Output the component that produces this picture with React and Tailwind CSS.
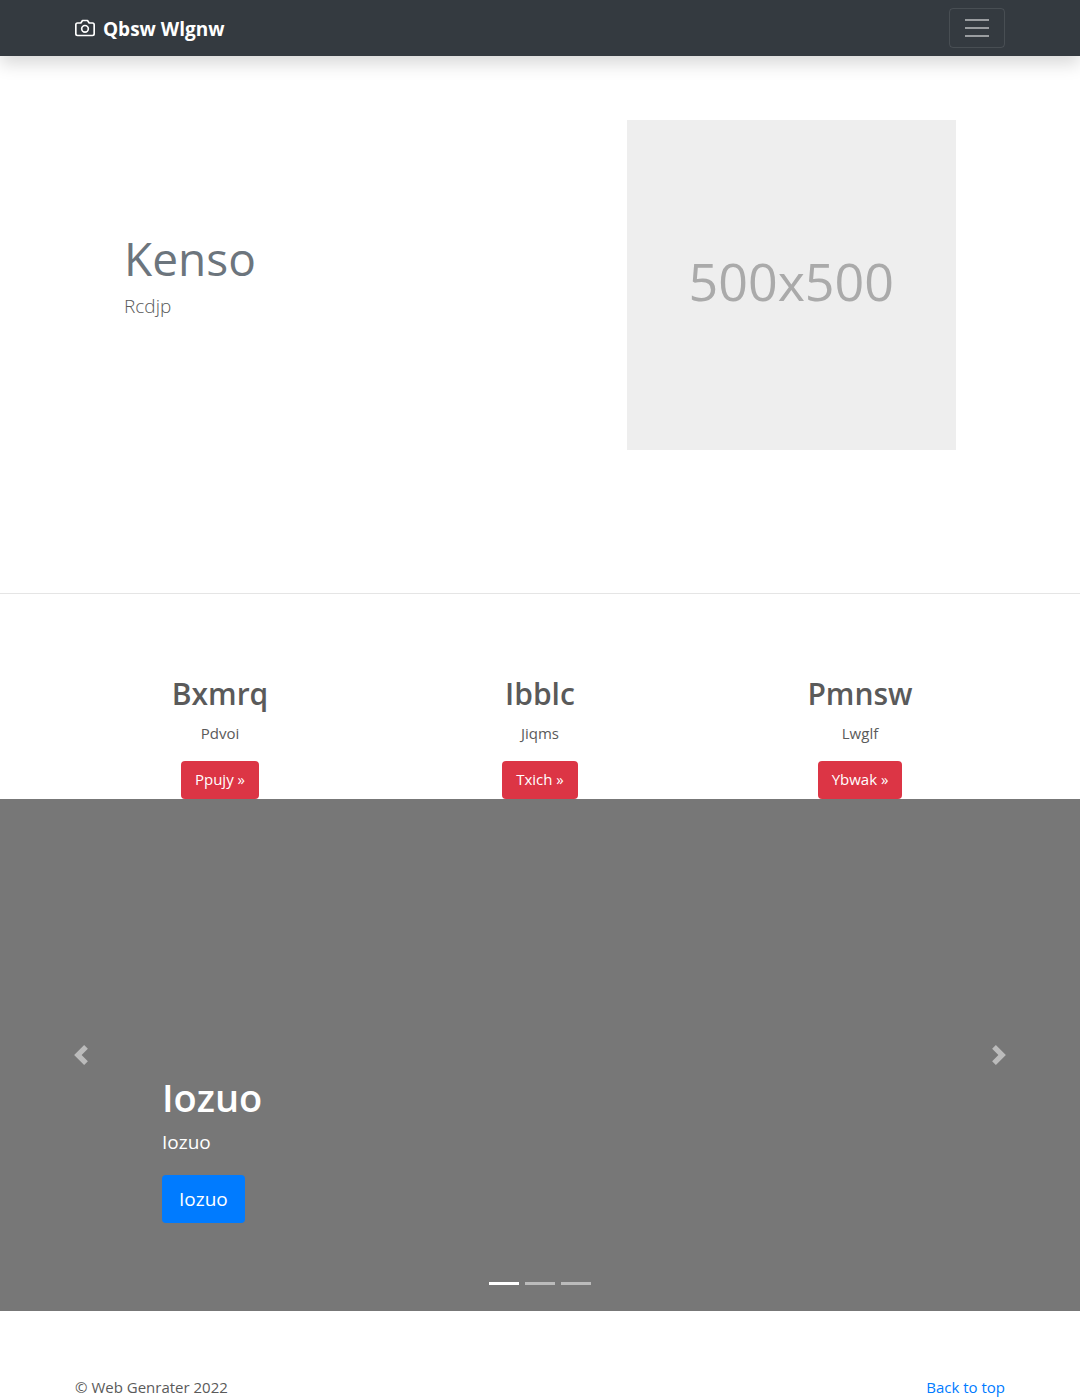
const features = [
  { title: 'Bxmrq', text: 'Pdvoi', action: 'Ppujy »' },
  { title: 'Ibblc', text: 'Jiqms', action: 'Txich »' },
  { title: 'Pmnsw', text: 'Lwglf', action: 'Ybwak »' },
];

function CameraIcon() {
  return (
    <svg className="mr-2 size-5" viewBox="0 0 24 24" fill="none" stroke="currentColor" strokeWidth="2" strokeLinecap="round" strokeLinejoin="round" aria-hidden="true">
      <path d="M23 19a2 2 0 0 1-2 2H3a2 2 0 0 1-2-2V8a2 2 0 0 1 2-2h4l2-3h6l2 3h4a2 2 0 0 1 2 2z" />
      <circle cx="12" cy="13" r="4" />
    </svg>
  );
}

function Header() {
  return (
    <header className="bg-[#343a40] shadow-[0_8px_16px_rgba(0,0,0,0.15)]">
      <div className="mx-auto flex h-14 max-w-[960px] items-center justify-between px-[15px] text-white">
        <a href="#top" className="flex items-center text-[19px] leading-[30px] font-bold">
          <CameraIcon />
          <span className="pt-0.5">Qbsw Wlgnw</span>
        </a>
        <button type="button" aria-label="Toggle navigation" className="flex h-10 w-14 items-center justify-center rounded border border-white/10 text-white/50">
          <svg className="size-[30px]" viewBox="0 0 30 30" stroke="currentColor" strokeWidth="2" strokeMiterlimit="10" aria-hidden="true">
            <path d="M3 7h24M3 15h24M3 23h24" />
          </svg>
        </button>
      </div>
    </header>
  );
}

function Hero() {
  return (
    <section className="mx-auto grid max-w-[960px] grid-cols-12 px-[15px] pt-16 pb-[143px]">
      <div className="col-span-7 self-center pb-5 pl-[49px]">
        <h1 className="mb-[3px] text-[46px] leading-[60px] text-[#6c757d]">Kenso</h1>
        <p className="text-[19px] leading-[30px] font-light">Rcdjp</p>
      </div>
      <div className="col-span-5 mr-[49px] ml-[9px] flex aspect-square items-center justify-center bg-[#eee] pb-2 text-[52px] text-[#aaa]">
        500x500
      </div>
    </section>
  );
}

function Features() {
  return (
    <section className="mx-auto grid max-w-[960px] grid-cols-3 pt-20 text-center">
      {features.map((item) => (
        <div key={item.title} className="flex flex-col items-center">
          <h2 className="mb-[7px] text-[30px] leading-[40px] font-semibold">{item.title}</h2>
          <p className="mb-4 text-[15px] leading-6">{item.text}</p>
          <button type="button" className="h-[38px] rounded bg-[#dc3545] px-[14px] text-[15px] text-white">{item.action}</button>
        </div>
      ))}
    </section>
  );
}

function Carousel() {
  return (
    <section className="relative h-[512px] bg-[#777] text-white">
      <div className="absolute inset-x-[15%] bottom-[88px]">
        <h2 className="mb-[6px] text-[38px] leading-[48px] font-semibold">Iozuo</h2>
        <p className="mb-[18px] text-[19px] leading-[30px]">Iozuo</p>
        <button type="button" className="h-12 rounded bg-[#007bff] px-[17px] pt-0.5 text-[19px]">Iozuo</button>
      </div>
      <button type="button" aria-label="Previous" className="absolute inset-y-0 left-0 flex w-[15%] items-center justify-center opacity-50">
        <svg className="size-5" viewBox="0 0 8 8" fill="#fff" aria-hidden="true"><path d="M5.25 0l-4 4 4 4 1.5-1.5L4.25 4l2.5-2.5L5.25 0z" /></svg>
      </button>
      <button type="button" aria-label="Next" className="absolute inset-y-0 right-0 flex w-[15%] items-center justify-center opacity-50">
        <svg className="size-5" viewBox="0 0 8 8" fill="#fff" aria-hidden="true"><path d="M2.75 0l-1.5 1.5L3.75 4l-2.5 2.5L2.75 8l4-4-4-4z" /></svg>
      </button>
      <div className="absolute inset-x-0 bottom-[26px] flex justify-center gap-[6px]">
        <button type="button" aria-label="Slide 1" className="h-[3px] w-[30px] bg-white" />
        <button type="button" aria-label="Slide 2" className="h-[3px] w-[30px] bg-white/50" />
        <button type="button" aria-label="Slide 3" className="h-[3px] w-[30px] bg-white/50" />
      </div>
    </section>
  );
}

export default function App() {
  return (
    <div id="top" className="bg-white font-['Segoe_UI','Open_Sans','Noto_Sans',sans-serif] text-[#5a5a5a]">
      <Header />
      <main>
        <Hero />
        <hr className="border-black/10" />
        <Features />
        <Carousel />
      </main>
      <footer className="mx-auto flex max-w-[960px] justify-between px-[15px] pt-16 text-[15px] leading-6">
        <p>© Web Genrater 2022</p>
        <a href="#top" className="text-[#007bff]">Back to top</a>
      </footer>
    </div>
  );
}
